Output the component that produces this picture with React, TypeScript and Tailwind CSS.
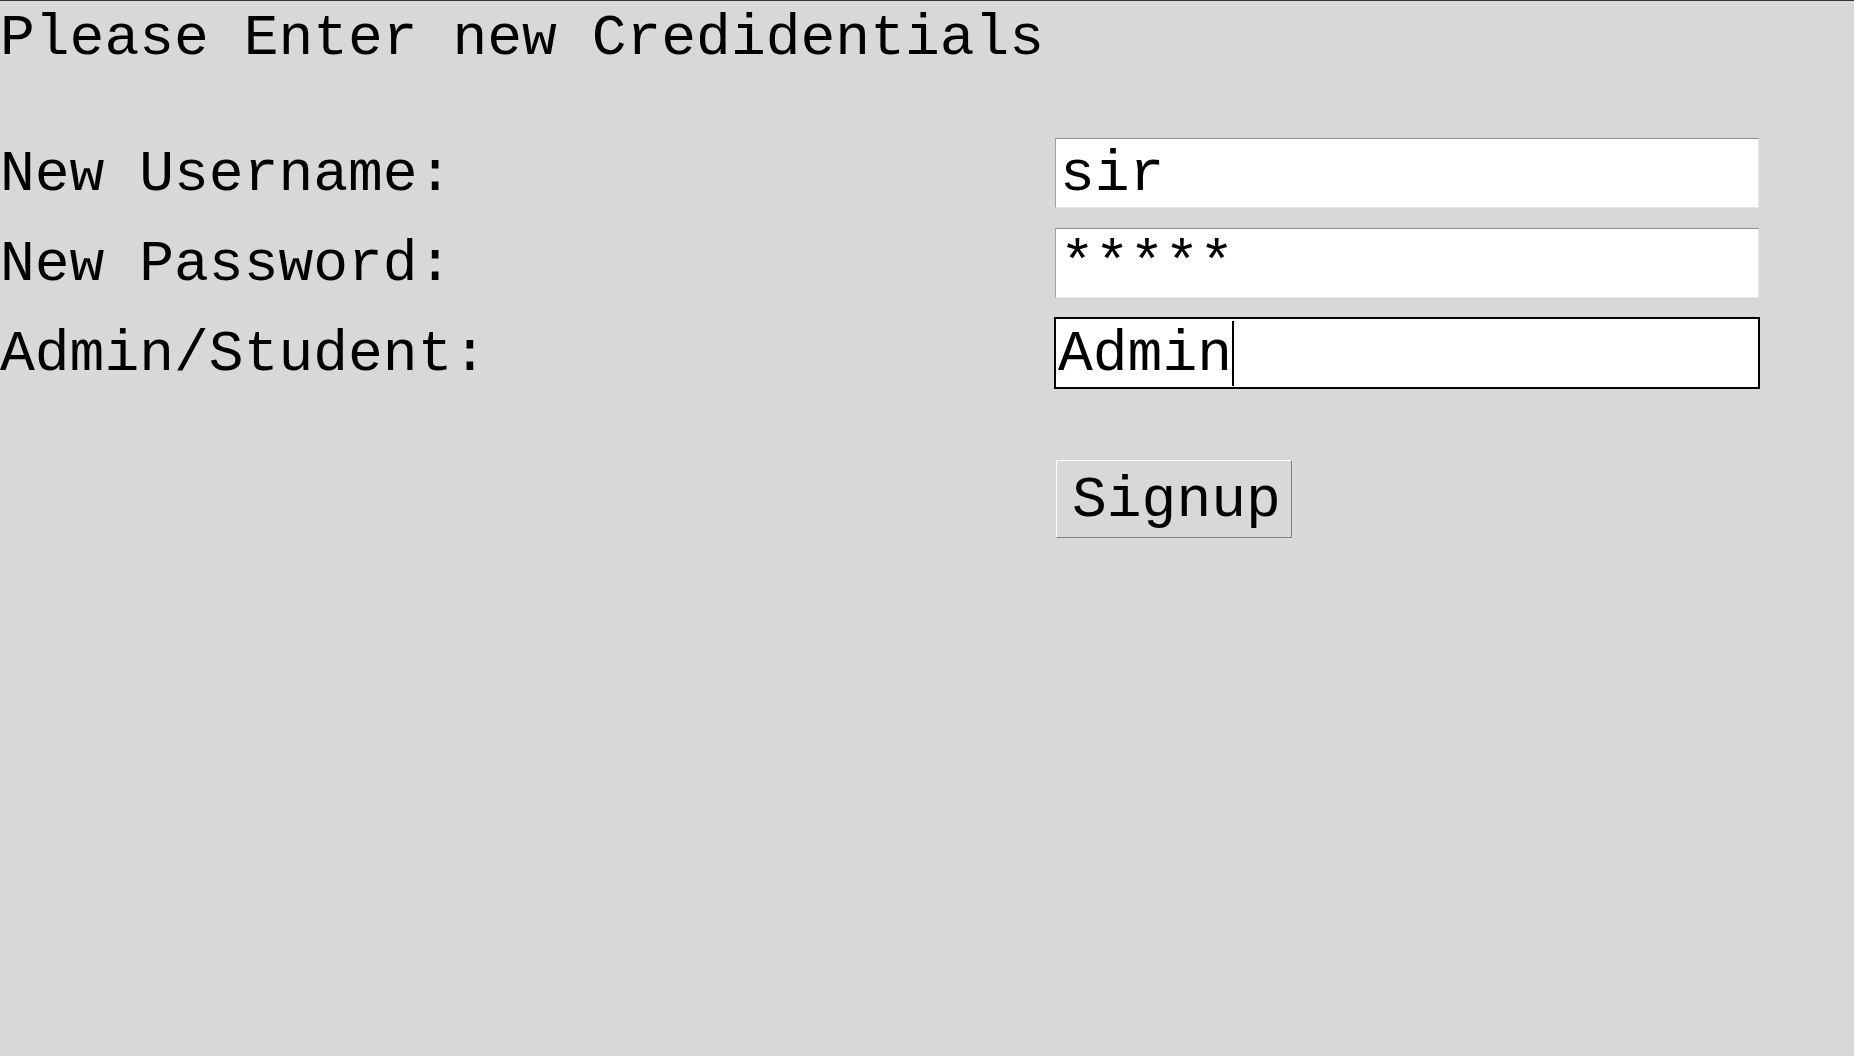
const mono = "font-['Courier_New','Liberation_Mono',monospace]";

function Field({ value, focused = false }: { value: string; focused?: boolean }) {
    if (focused) {
        return (
            <div className="w-[706px] h-[72px] bg-white border-2 border-black flex items-center pl-[2px] -ml-[1px]">
                <span className="whitespace-pre pt-[2px]">{value}</span>
                <span className="w-[2px] h-[65px] bg-black" />
            </div>
        )
    }
    return (
        <div className="w-[704px] h-[70px] bg-white border border-t-[#8f8f8f] border-l-[#a0a0a0] border-r-[#e4e4e4] border-b-[#e4e4e4] flex items-center pl-[4px]">
            <span className="whitespace-pre pt-[2px]">{value}</span>
        </div>
    )
}

export default function App() {
    const rows = [
        { label: 'New Username:', value: 'sir' },
        { label: 'New Password:', value: '*****' },
        { label: 'Admin/Student:', value: 'Admin', focused: true },
    ]

    return (
        <div className={`min-h-screen w-full bg-[#d8d8d8] border-t border-[#333333] text-black text-[58px] leading-normal ${mono}`}>
            {/* Title */}
            <div className="-mt-[6px] whitespace-pre">Please Enter new Credidentials</div>

            {/* Form */}
            <div className="mt-[56px] grid grid-cols-[1055px_706px] auto-rows-[70px] gap-y-[20px]">
                {rows.map((r) => (
                    <div key={r.label} className="contents">
                        <div className="flex items-center whitespace-pre pt-[2px]">{r.label}</div>
                        <div className="flex items-center">
                            <Field value={r.value} focused={r.focused} />
                        </div>
                    </div>
                ))}
            </div>

            {/* Submit */}
            <div className="mt-[72px] pl-[1056px]">
                <div className="w-[236px] h-[78px] flex items-center pl-[15px] pt-[2px] border border-t-white border-l-white border-r-[#808080] border-b-[#808080] bg-[#d8d8d8]">
                    Signup
                </div>
            </div>
        </div>
    )
}
